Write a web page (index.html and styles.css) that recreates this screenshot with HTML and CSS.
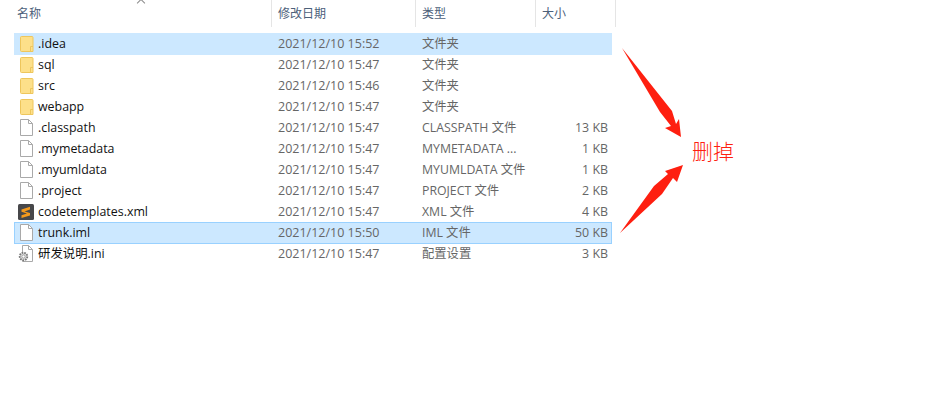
FILE: index.html
```html
<!DOCTYPE html>
<html lang="zh-CN">
  <head>
    <meta charset="UTF-8" />
    <meta name="viewport" content="width=device-width, initial-scale=1.0" />
    <title>文件列表</title>
    <link rel="stylesheet" href="styles.css">
  </head>
  <body>
    <svg width="0" height="0" class="defs">
      <defs>
        <symbol id="folder" viewBox="0 0 14 16">
          <path d="M.5 1.5 Q.5.5 1.5.5 H12 Q13 .5 13 1.5 V15.5 H1.5 Q.5 15.5 .5 14.5Z" fill="#fde08a" stroke="#eec65c"/>
          <path d="M10.5 15.5 V10.5 H13" fill="none" stroke="#eec65c"/>
        </symbol>
        <symbol id="file" viewBox="0 0 13 17">
          <path d="M.5.5 H8.5 L12.5 4.5 V16.5 H.5Z" fill="#fff" stroke="#a9a9a9"/>
          <path d="M8.5.5 V4.5 H12.5" fill="none" stroke="#a9a9a9"/>
        </symbol>
        <symbol id="sublime" viewBox="0 0 16 16">
          <rect width="16" height="16" rx="1.5" fill="#47474a"/>
          <path d="M3.5 5.5 L12 2.8 V5.6 L6.5 7.4 L12 9 V11.6 L3.5 14 V11.2 L9 9.4 L3.5 7.8Z" fill="#f59a1c"/>
        </symbol>
        <symbol id="settings" viewBox="0 0 16 17">
          <path d="M4.5.5 H10.5 L14.5 4.5 V16.5 H4.5Z" fill="#fff" stroke="#a9a9a9"/>
          <path d="M10.5.5 V4.5 H14.5" fill="none" stroke="#a9a9a9"/>
          <circle cx="5.5" cy="11.5" r="3.8" fill="#dcdcdc" stroke="#777" stroke-width="1.8" stroke-dasharray="1.6 1"/>
          <circle cx="5.5" cy="11.5" r="1.6" fill="#fff" stroke="#888" stroke-width=".7"/>
        </symbol>
      </defs>
    </svg>

    <div class="explorer">
      <div class="header">
        <div class="col-name">名称<span class="sort"></span></div>
        <div class="col-date">修改日期</div>
        <div class="col-type">类型</div>
        <div class="col-size">大小</div>
      </div>

      <div class="rows">
        <div class="row selected">
          <svg class="icon folder"><use href="#folder"/></svg>
          <span class="name">.idea</span><span class="date">2021/12/10 15:52</span><span class="type">文件夹</span><span class="size"></span>
        </div>
        <div class="row">
          <svg class="icon folder"><use href="#folder"/></svg>
          <span class="name">sql</span><span class="date">2021/12/10 15:47</span><span class="type">文件夹</span><span class="size"></span>
        </div>
        <div class="row">
          <svg class="icon folder"><use href="#folder"/></svg>
          <span class="name">src</span><span class="date">2021/12/10 15:46</span><span class="type">文件夹</span><span class="size"></span>
        </div>
        <div class="row">
          <svg class="icon folder"><use href="#folder"/></svg>
          <span class="name">webapp</span><span class="date">2021/12/10 15:47</span><span class="type">文件夹</span><span class="size"></span>
        </div>
        <div class="row">
          <svg class="icon file"><use href="#file"/></svg>
          <span class="name">.classpath</span><span class="date">2021/12/10 15:47</span><span class="type">CLASSPATH 文件</span><span class="size">13 KB</span>
        </div>
        <div class="row">
          <svg class="icon file"><use href="#file"/></svg>
          <span class="name">.mymetadata</span><span class="date">2021/12/10 15:47</span><span class="type">MYMETADATA ...</span><span class="size">1 KB</span>
        </div>
        <div class="row">
          <svg class="icon file"><use href="#file"/></svg>
          <span class="name">.myumldata</span><span class="date">2021/12/10 15:47</span><span class="type">MYUMLDATA 文件</span><span class="size">1 KB</span>
        </div>
        <div class="row">
          <svg class="icon file"><use href="#file"/></svg>
          <span class="name">.project</span><span class="date">2021/12/10 15:47</span><span class="type">PROJECT 文件</span><span class="size">2 KB</span>
        </div>
        <div class="row">
          <svg class="icon sublime"><use href="#sublime"/></svg>
          <span class="name">codetemplates.xml</span><span class="date">2021/12/10 15:47</span><span class="type">XML 文件</span><span class="size">4 KB</span>
        </div>
        <div class="row selected outlined">
          <svg class="icon file"><use href="#file"/></svg>
          <span class="name">trunk.iml</span><span class="date">2021/12/10 15:50</span><span class="type">IML 文件</span><span class="size">50 KB</span>
        </div>
        <div class="row">
          <svg class="icon settings"><use href="#settings"/></svg>
          <span class="name">研发说明.ini</span><span class="date">2021/12/10 15:47</span><span class="type">配置设置</span><span class="size">3 KB</span>
        </div>
      </div>
    </div>

    <!-- red annotation drawn on top of the screenshot -->
    <svg class="arrows" width="943" height="401">
      <polygon points="622,48 672,111 676,124 679,119 681,137 665,128 671,126 660,112" fill="#fe1f10"/>
      <polygon points="620,233 654,186 668,174 665,171 683,165 677,182 673,178 662,194" fill="#fe1f10"/>
    </svg>
    <div class="note">删掉</div>
  </body>
</html>
```

FILE: styles.css
```css
* {
  margin: 0;
  padding: 0;
  box-sizing: border-box;
}

html,
body {
  height: 100%;
}

body {
  position: relative;
  overflow: hidden;
  background: #fff;
  font-family: "Open Sans", "Noto Sans CJK SC", sans-serif;
  font-size: 12px;
}

.defs {
  position: absolute;
}

.explorer {
  width: 616px;
}

.header {
  display: flex;
  height: 27px;
  color: #4c607a;
  line-height: 28px;
}

.header > div {
  border-right: 1px solid #e5e5e5;
  padding-left: 6px;
}

.header .col-name {
  position: relative;
  width: 272px;
  padding-left: 17px;
}

.header .col-date {
  width: 144px;
}

.header .col-type {
  width: 120px;
}

.header .col-size {
  width: 80px;
}

.sort {
  position: absolute;
  left: 138px;
  top: 0;
  width: 6px;
  height: 6px;
  border-left: 1px solid #8a8a8a;
  border-top: 1px solid #8a8a8a;
  transform: rotate(45deg);
}

.rows {
  padding-top: 6px;
  width: 598px;
  margin-left: 14px;
}

/* rows are 22px tall but overlap by 1px, like the explorer list */
.row {
  display: flex;
  align-items: center;
  height: 22px;
  margin-bottom: -1px;
  padding-bottom: 1px;
  color: #666;
  line-height: 17px;
  white-space: nowrap;
}

.selected {
  background: #cce8ff;
}

.outlined {
  outline: 1px solid #99d1ff;
  outline-offset: -1px;
}

.icon {
  flex: none;
}

.folder {
  width: 14px;
  height: 16px;
  margin-left: 6px;
  margin-right: 4px;
}

.file {
  width: 13px;
  height: 17px;
  margin-left: 6px;
  margin-right: 5px;
}

.sublime {
  width: 16px;
  height: 16px;
  margin-left: 4px;
  margin-right: 4px;
}

.settings {
  width: 16px;
  height: 17px;
  margin-left: 4px;
  margin-right: 4px;
}

.name {
  width: 240px;
  color: #111;
  font-size: 12.4px;
}

.date {
  width: 144px;
  font-size: 12.5px;
}

.type {
  width: 120px;
  font-size: 12.3px;
}

.size {
  width: 66px;
  text-align: right;
  font-size: 12.4px;
}

.arrows {
  position: absolute;
  left: 0;
  top: 0;
}

.note {
  position: absolute;
  left: 692px;
  top: 136px;
  color: #fe1f10;
  font-size: 21px;
  font-weight: 300;
  line-height: 30px;
}
```
